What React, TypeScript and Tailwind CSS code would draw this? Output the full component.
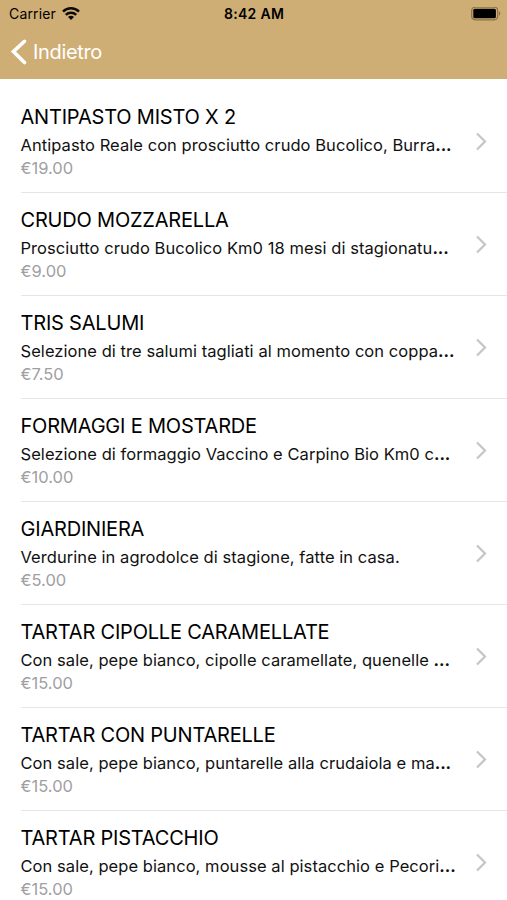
type Dish = {
  name: string;
  description: string;
  truncated?: boolean;
  price: string;
};

const dishes: Dish[] = [
  { name: "ANTIPASTO MISTO X 2", description: "Antipasto Reale con prosciutto crudo Bucolico, Burra", truncated: true, price: "€19.00" },
  { name: "CRUDO MOZZARELLA", description: "Prosciutto crudo Bucolico Km0 18 mesi di stagionatu", truncated: true, price: "€9.00" },
  { name: "TRIS SALUMI", description: "Selezione di tre salumi tagliati al momento con coppa", truncated: true, price: "€7.50" },
  { name: "FORMAGGI E MOSTARDE", description: "Selezione di formaggio Vaccino e Carpino Bio Km0 c", truncated: true, price: "€10.00" },
  { name: "GIARDINIERA", description: "Verdurine in agrodolce di stagione, fatte in casa.", price: "€5.00" },
  { name: "TARTAR CIPOLLE CARAMELLATE", description: "Con sale, pepe bianco, cipolle caramellate, quenelle ", truncated: true, price: "€15.00" },
  { name: "TARTAR CON PUNTARELLE", description: "Con sale, pepe bianco, puntarelle alla crudaiola e ma", truncated: true, price: "€15.00" },
  { name: "TARTAR PISTACCHIO", description: "Con sale, pepe bianco, mousse al pistacchio e Pecori", truncated: true, price: "€15.00" },
];

function WifiIcon() {
  return (
    <svg width="18" height="14" viewBox="0 0 18 14" fill="none" stroke="#0d0b07" strokeWidth="2.5">
      <path d="M1 4.6a11.4 11.4 0 0 1 16 0" />
      <path d="M3.8 7.9a7.4 7.4 0 0 1 10.4 0" />
      <path d="M9 13.1 6 10a4.2 4.2 0 0 1 6 0z" fill="#0d0b07" stroke="none" />
    </svg>
  );
}

function BatteryIcon() {
  return (
    <svg width="30" height="14" viewBox="0 0 30 14" fill="none">
      <rect x="0.7" y="0.2" width="26" height="12.6" rx="3.5" stroke="#8a7148" strokeWidth="1.2" />
      <rect x="2.3" y="1.8" width="22.6" height="9.4" rx="1.5" fill="#000" />
      <path d="M28 4.3v4.4c1.8-.8 1.8-3.6 0-4.4z" fill="#8a7148" />
    </svg>
  );
}

function DishRow({ dish }: { dish: Dish }) {
  return (
    <li className="ml-[20.5px] flex h-[103px] items-center border-b border-[#e6e6e7] pr-[20px]">
      <div className="min-w-0 flex-1 pb-[3px] whitespace-nowrap">
        <h2 className="text-[20px] leading-[30px] tracking-[-0.2px]">{dish.name}</h2>
        <p className="text-[16.5px] leading-[26px] tracking-[0.06px] text-[#111]">
          {dish.description}
          {dish.truncated ? <span className="font-bold tracking-[-0.1px]">...</span> : null}
        </p>
        <p className="text-[16.5px] leading-[20px] text-[#a0a0a2]">{dish.price}</p>
      </div>
      <svg className="shrink-0" width="12" height="20" viewBox="0 0 12 20" fill="none" stroke="#c5c5c8" strokeWidth="2.2">
        <path d="m2 2.5 8 8-8 8" />
      </svg>
    </li>
  );
}

export default function App() {
  return (
    <div className="flex h-[900px] w-[507px] flex-col overflow-hidden bg-white font-['Inter',sans-serif] text-black">
      <header className="h-[79px] shrink-0 bg-[#cfae75]">
        <div className="grid h-[27px] grid-cols-3 items-center pr-[6px] pl-[9px] text-[14px]">
          <div className="flex items-center gap-[6px]">
            <span className="tracking-[0.15px]">Carrier</span>
            <WifiIcon />
          </div>
          <span className="pr-[2px] text-center font-semibold tracking-[0.3px]">8:42 AM</span>
          <div className="flex justify-end">
            <BatteryIcon />
          </div>
        </div>
        <button type="button" className="flex h-[50px] items-center gap-[6px] pl-[10px] text-[20px] tracking-[-0.35px] text-white">
          <svg width="17" height="26" viewBox="0 0 17 26" fill="none" stroke="currentColor" strokeWidth="3.6" strokeLinecap="round">
            <path d="M14.5 2.3 3.4 12.6l11.1 10.9" />
          </svg>
          Indietro
        </button>
      </header>
      <ul className="pt-[11px]">
        {dishes.map((dish) => (
          <DishRow key={dish.name} dish={dish} />
        ))}
      </ul>
    </div>
  );
}
